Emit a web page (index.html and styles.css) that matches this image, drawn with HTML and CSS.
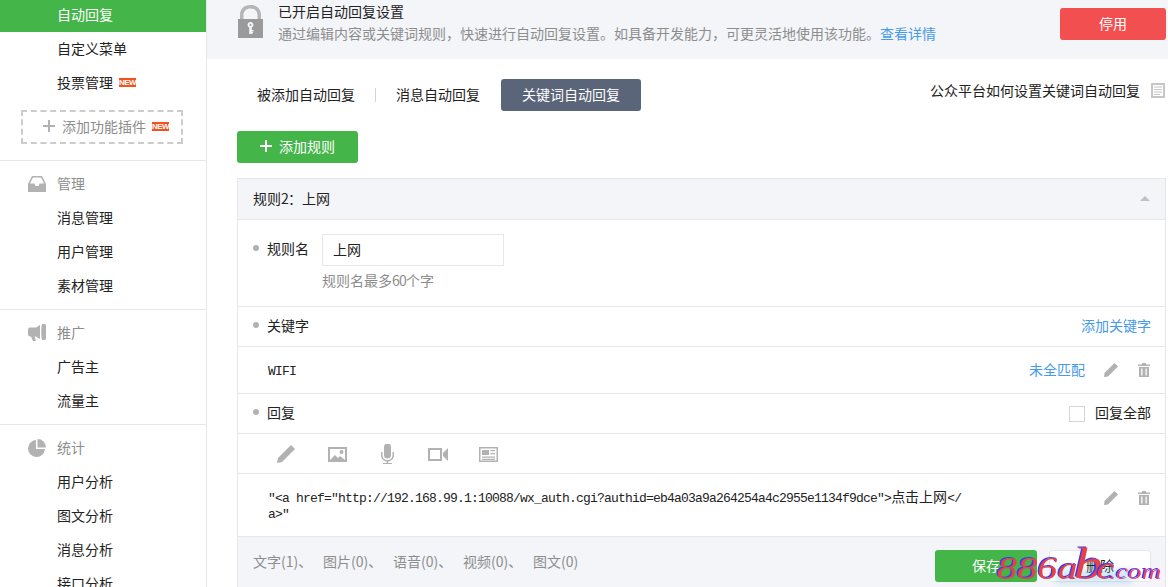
FILE: index.html
```html
<!DOCTYPE html>
<html lang="zh-CN">
<head>
<meta charset="utf-8">
<title>自动回复</title>
<link rel="stylesheet" href="styles.css">
</head>
<body>
<div class="page">
  <aside class="sidebar">
    <div class="nav-item nav-active">自动回复</div>
    <div class="nav-item">自定义菜单</div>
    <div class="nav-item">投票管理<span class="badge">NEW</span></div>
    <div class="plugin-wrap">
      <div class="plugin">
        <svg class="plugin-plus" viewBox="0 0 12 12"><path d="M5 0h2v5h5v2H7v5H5V7H0V5h5z"/></svg>
        <span>添加功能插件</span><span class="badge">NEW</span>
      </div>
    </div>
    <section class="nav-section">
      <div class="nav-head">
        <svg class="nav-icon" viewBox="0 0 18 18"><path d="M4 1h10l4 8v8H0V9zM5 2.600 2 8.500h4.500l1 2.500h3l1-2.500H16l-3-5.900z"/></svg>
        管理
      </div>
      <div class="nav-item">消息管理</div>
      <div class="nav-item">用户管理</div>
      <div class="nav-item">素材管理</div>
    </section>
    <section class="nav-section">
      <div class="nav-head">
        <svg class="nav-icon" viewBox="0 0 18 18"><path d="M0 5.500C0 4 1 3.500 2 3.500h6L12 1v14L8 12.500H6.500L8 17H5L3 12.500H2c-1 0-2-1-2-2zM14 0c-1 3-1 13 0 16h2c1 0 2-.3 2-1.500V1.500C18 .5 17 0 16 0z"/></svg>
        推广
      </div>
      <div class="nav-item">广告主</div>
      <div class="nav-item">流量主</div>
    </section>
    <section class="nav-section">
      <div class="nav-head">
        <svg class="nav-icon" viewBox="0 0 18 18"><path d="M8 1v9h9a8.500 8.500 0 1 1-9-9z"/><path d="M9.500 0a8.500 8.500 0 0 1 8.500 8.500H9.500z"/></svg>
        统计
      </div>
      <div class="nav-item">用户分析</div>
      <div class="nav-item">图文分析</div>
      <div class="nav-item">消息分析</div>
      <div class="nav-item">接口分析</div>
    </section>
  </aside>

  <main class="main">
    <header class="banner">
      <svg class="lock" viewBox="0 0 25 33">
        <path class="lock-top" d="M2 17V10C2 4 6 0 12.500 0S23 4 23 10v7h-3.500V10c0-4-3-6.500-7-6.500S5.500 6 5.500 10v7z"/>
        <path class="lock-body" d="M0 14h25v19H0z"/>
        <path class="lock-key" d="M12.500 17a3 3 0 0 1 1.300 5.700V29h-2.600v-6.300A3 3 0 0 1 12.500 17zm0 2a1 1 0 1 0 0 2 1 1 0 0 0 0-2zM13.500 25h2v1.400h-2zM13.500 27h1.500v1.400h-1.500z"/>
      </svg>
      <div class="banner-text">
        <div class="banner-title">已开启自动回复设置</div>
        <div class="banner-desc">通过编辑内容或关键词规则，快速进行自动回复设置。如具备开发能力，可更灵活地使用该功能。<a class="link">查看详情</a></div>
      </div>
      <div class="btn btn-red">停用</div>
    </header>

    <div class="content">
      <div class="tabs">
        <div class="tab tab-first">被添加自动回复</div>
        <div class="tab-sep"></div>
        <div class="tab tab-second">消息自动回复</div>
        <div class="tab tab-active">关键词自动回复</div>
        <div class="help">公众平台如何设置关键词自动回复
          <svg class="doc" viewBox="0 0 14 15"><path d="M0 0h14v15H0zM2 2v11h10V2z"/><path d="M3 3.500h8v1H3zM3 6h8v1H3zM3 8.500h8v1H3zM3 11h6v1H3z"/></svg>
        </div>
      </div>

      <div class="btn btn-green btn-add">
        <svg class="add-plus" viewBox="0 0 12 12"><path d="M5 0h2v5h5v2H7v5H5V7H0V5h5z"/></svg>添加规则
      </div>

      <div class="panel">
        <div class="panel-head">
          <span>规则<span class="num">2</span>：上网</span>
          <span class="caret"></span>
        </div>
        <div class="row row-name">
          <div class="label label-name"><i class="dot"></i>规则名</div>
          <div class="name-field">
            <div class="input">上网</div>
            <div class="hint">规则名最多<span class="num">60</span>个字</div>
          </div>
        </div>
        <div class="row row-kw">
          <div class="label"><i class="dot"></i>关键字</div>
          <a class="link">添加关键字</a>
        </div>
        <div class="row row-wifi">
          <span class="mono mono-wifi">WIFI</span>
          <div class="actions">
            <a class="link match">未全匹配</a>
            <svg class="act" viewBox="0 0 14 14"><path d="M10.500 0 14 3.500 4 13.500 0 14l.5-4z"/></svg>
            <svg class="act" viewBox="0 0 14 14"><path d="M5 0h4v1.500h4V3H1V1.500h4zM2 4h10v10H2zM4.200 5.500v7h1.300v-7zM8.500 5.500v7h1.300v-7z"/></svg>
          </div>
        </div>
        <div class="row row-kw">
          <div class="label"><i class="dot"></i>回复</div>
          <div class="reply-all"><span class="check"></span>回复全部</div>
        </div>
        <div class="row row-tools">
          <svg class="tool" viewBox="0 0 20 20"><path d="M15 1l4 4L6 18l-5 1 1-5z"/></svg>
          <svg class="tool" viewBox="0 0 20 20"><path fill-rule="evenodd" d="M1 3h19v15H1zM3 5v11l5-5 3 3 2-2 5 4V5z"/><circle cx="14.500" cy="8" r="2"/></svg>
          <svg class="tool" viewBox="0 0 20 20"><path d="M7 3a3.500 3.500 0 0 1 7 0v8a3.500 3.500 0 0 1-7 0z"/><path d="M4 8h1.500v3c0 3 2 5 5 5s5-2 5-5V8H17v3c0 3.500-2.200 6-5.700 6.400V19H15v1H6v-1h3.700v-1.600C6.200 17 4 14.500 4 11z"/></svg>
          <svg class="tool" viewBox="0 0 20 20"><path fill-rule="evenodd" d="M0 4h14v13H0zM2 6v9h10V6z"/><path d="M15 9l5-5v13l-5-5z"/></svg>
          <svg class="tool" viewBox="0 0 20 20"><path fill-rule="evenodd" d="M1 3h19v15H1zM2.500 4.500v12h16v-12z"/><path d="M4 6h7v5H4zM12.500 6H17v1.300h-4.500zM12.500 9H17v1.300h-4.500zM4 12.500h13v1.200H4zM4 14.800h13V16H4z"/></svg>
        </div>
        <div class="row row-msg">
          <div class="msg"><span class="mono">"&lt;a href="http://192.168.99.1:10088/wx_auth.cgi?authid=eb4a03a9a264254a4c2955e1134f9dce"&gt;</span>点击上网<span class="mono">&lt;/a&gt;"</span></div>
          <div class="actions msg-actions">
            <svg class="act" viewBox="0 0 14 14"><path d="M10.500 0 14 3.500 4 13.500 0 14l.5-4z"/></svg>
            <svg class="act" viewBox="0 0 14 14"><path d="M5 0h4v1.500h4V3H1V1.500h4zM2 4h10v10H2zM4.200 5.500v7h1.300v-7zM8.500 5.500v7h1.300v-7z"/></svg>
          </div>
        </div>
        <div class="panel-foot">
          <div class="counts">
            <span class="count">文字(1)、</span>
            <span class="count">图片(0)、</span>
            <span class="count">语音(0)、</span>
            <span class="count">视频(0)、</span>
            <span class="count">图文(0)</span>
          </div>
          <div class="btn btn-green btn-foot">保存</div>
          <div class="btn btn-white btn-foot">删除</div>
        </div>
      </div>
    </div>
  </main>
</div>
<div class="wm-smudge"></div>
<div class="watermark">886<span class="wm-a">a</span><span class="wm-b">b</span><span class="wm-c">c</span><span class="wm-com">.com</span></div>
</body>
</html>
```

FILE: styles.css
```css
* {
  box-sizing: border-box;
}

html,
body {
  margin: 0;
  height: 587px;
  overflow: hidden;
}

body {
  position: relative;
  background: #fff;
  color: #222;
  font: 14px/20px "Noto Sans CJK SC", "Liberation Sans", sans-serif;
}

.page {
  display: flex;
  height: 587px;
  overflow: hidden;
}

/* sidebar */
.sidebar {
  flex: none;
  width: 207px;
  height: 587px;
  overflow: hidden;
  border-right: 1px solid #e7e7eb;
}

.nav-item,
.nav-head {
  display: flex;
  align-items: center;
  height: 34px;
  padding: 0 0 2px 57px;
}

.nav-active {
  height: 32px;
  padding-bottom: 4px;
  background: #44b549;
  color: #fff;
}

.nav-head {
  position: relative;
  color: #8d8d8d;
}

.nav-icon {
  position: absolute;
  left: 28px;
  top: 8px;
  width: 18px;
  height: 18px;
  fill: #b2b2b2;
}

.nav-section {
  padding: 6px 0;
  border-top: 1px solid #e7e7eb;
}

.badge {
  display: inline-block;
  width: 17px;
  height: 9px;
  margin-left: 6px;
  background: #f4511e;
  color: #fff;
  font: bold 8px/9px "Liberation Sans", sans-serif;
  letter-spacing: -.5px;
  text-align: center;
  white-space: nowrap;
}

.plugin-wrap {
  padding: 10px 0 16px 21px;
}

.plugin {
  display: flex;
  align-items: center;
  width: 162px;
  height: 34px;
  padding: 0 0 2px 20px;
  border: 2px dashed #ccc;
  color: #8d8d8d;
}

.plugin-plus {
  width: 12px;
  height: 12px;
  margin-right: 7px;
  fill: #b2b2b2;
}

/* main */
.main {
  flex: 1;
  min-width: 0;
}

.banner {
  display: flex;
  height: 59px;
  padding: 0 2px 0 31px;
  background: #f4f5f9;
}

.lock {
  flex: none;
  width: 25px;
  height: 33px;
  margin-top: 5px;
}

.lock-top {
  fill: #b5b5b5;
}

.lock-body {
  fill: #9a9a9a;
}

.lock-key {
  fill: #f4f5f9;
}

.banner-text {
  flex: 1;
  padding: 1px 0 0 15px;
}

.banner-title {
  height: 20px;
}

.banner-desc {
  height: 20px;
  margin-top: 2px;
  color: #8d8d8d;
}

.link {
  color: #459ae9;
}

.btn {
  display: flex;
  flex: none;
  align-items: center;
  justify-content: center;
  height: 32px;
  padding-bottom: 2px;
  border-radius: 3px;
  color: #fff;
}

.btn-red {
  width: 106px;
  margin-top: 8px;
  background: #f25050;
}

.btn-green {
  background: #44b549;
}

.btn-white {
  border: 1px solid #e7e7eb;
  background: #fff;
  color: #222;
}

.content {
  padding: 20px 2px 0 30px;
}

.tabs {
  display: flex;
  align-items: center;
  height: 32px;
}

.tab-first {
  margin-left: 20px;
  padding-bottom: 3px;
}

.tab-sep {
  width: 1px;
  height: 14px;
  margin: 0 20px;
  background: #d5d5d9;
}

.tab-second {
  margin-right: 21px;
  padding-bottom: 3px;
}

.tab-active {
  width: 140px;
  height: 32px;
  border-radius: 3px;
  background: #5a6579;
  color: #fff;
  line-height: 30px;
  text-align: center;
}

.help {
  display: flex;
  align-items: center;
  margin-left: auto;
  padding-bottom: 10px;
}

.doc {
  width: 14px;
  height: 15px;
  margin-left: 11px;
  margin-right: 1px;
  fill: #c6c6c6;
}

.btn-add {
  width: 121px;
  margin-top: 20px;
}

.add-plus {
  width: 12px;
  height: 12px;
  margin-right: 7px;
  fill: #fff;
}

.panel {
  margin-top: 15px;
  border: 1px solid #e7e7eb;
  border-bottom: 0;
}

.panel-head {
  display: flex;
  align-items: center;
  justify-content: space-between;
  height: 41px;
  padding: 0 15px 2px;
  border-bottom: 1px solid #e7e7eb;
  background: #f4f5f9;
}

.caret {
  width: 0;
  height: 0;
  border-right: 5px solid transparent;
  border-bottom: 5px solid #c0c0c0;
  border-left: 5px solid transparent;
}

.num {
  letter-spacing: -.8px;
}

.row {
  display: flex;
  align-items: center;
  justify-content: space-between;
  padding: 0 14px 0 15px;
  border-bottom: 1px solid #e7e7eb;
}

.row-name {
  align-items: flex-start;
  justify-content: flex-start;
  height: 87px;
  padding-top: 14px;
}

.row-kw {
  height: 40px;
  padding-bottom: 3px;
}

.row-wifi {
  height: 47px;
  padding-left: 30px;
}

.row-tools {
  justify-content: flex-start;
  gap: 30.5px;
  height: 40px;
  padding-left: 38px;
}

.row-msg {
  align-items: flex-start;
  height: 63px;
  padding: 15px 14px 0 30px;
}

.label {
  display: flex;
  align-items: center;
}

.label-name {
  height: 28px;
}

.dot {
  width: 6px;
  height: 6px;
  margin-right: 8px;
  border-radius: 50%;
  background: #b2b2b2;
}

.name-field {
  margin-left: 13px;
}

.input {
  width: 182px;
  height: 32px;
  padding-left: 10px;
  border: 1px solid #e7e7eb;
  line-height: 28px;
}

.hint {
  margin-top: 4px;
  color: #8d8d8d;
}

.mono {
  font: 13px/12px "Liberation Mono", monospace;
  letter-spacing: -.8px;
}

.mono-wifi {
  margin-top: 3px;
}

.actions {
  display: flex;
  align-items: center;
  gap: 19px;
}

.match {
  margin-top: -3px;
}

.act {
  width: 14px;
  height: 14px;
  fill: #b2b2b2;
}

.reply-all {
  display: flex;
  align-items: center;
}

.check {
  width: 16px;
  height: 16px;
  margin: 3px 10px 0 0;
  border: 1px solid #d5d5d9;
  background: #fff;
}

.tool {
  flex: none;
  width: 20px;
  height: 20px;
  fill: #b2b2b2;
}

.msg {
  width: 695px;
  line-height: 15px;
  word-break: break-all;
}

.msg-actions {
  margin-top: 2px;
}

.panel-foot {
  display: flex;
  align-items: center;
  height: 54px;
  gap: 12px;
  padding: 4px 14px 0 15px;
  background: #f4f5f9;
}

.counts {
  display: flex;
  flex: 1;
  padding-bottom: 10px;
  color: #8d8d8d;
}

.count {
  width: 70px;
}

.btn-foot {
  width: 102px;
}

/* site watermark painted over the page */
.wm-smudge {
  position: absolute;
  left: 1056px;
  top: 569px;
  width: 76px;
  height: 14px;
  background: rgba(120, 190, 230, .35);
  filter: blur(3px);
}

.watermark {
  position: absolute;
  left: 997px;
  top: 541px;
  color: #e8404a;
  font: italic 31px/46px "Liberation Serif", serif;
  text-shadow: -1px -1px 0 #3a3af0;
  transform: scaleX(1.3);
  transform-origin: left top;
  white-space: nowrap;
}

.wm-a {
  letter-spacing: -3px;
}

.wm-b {
  font-size: 45px;
  letter-spacing: -5px;
}

.wm-c {
  letter-spacing: -4px;
}

.wm-com {
  color: #ee3f78;
  font-size: 21px;
}
```
